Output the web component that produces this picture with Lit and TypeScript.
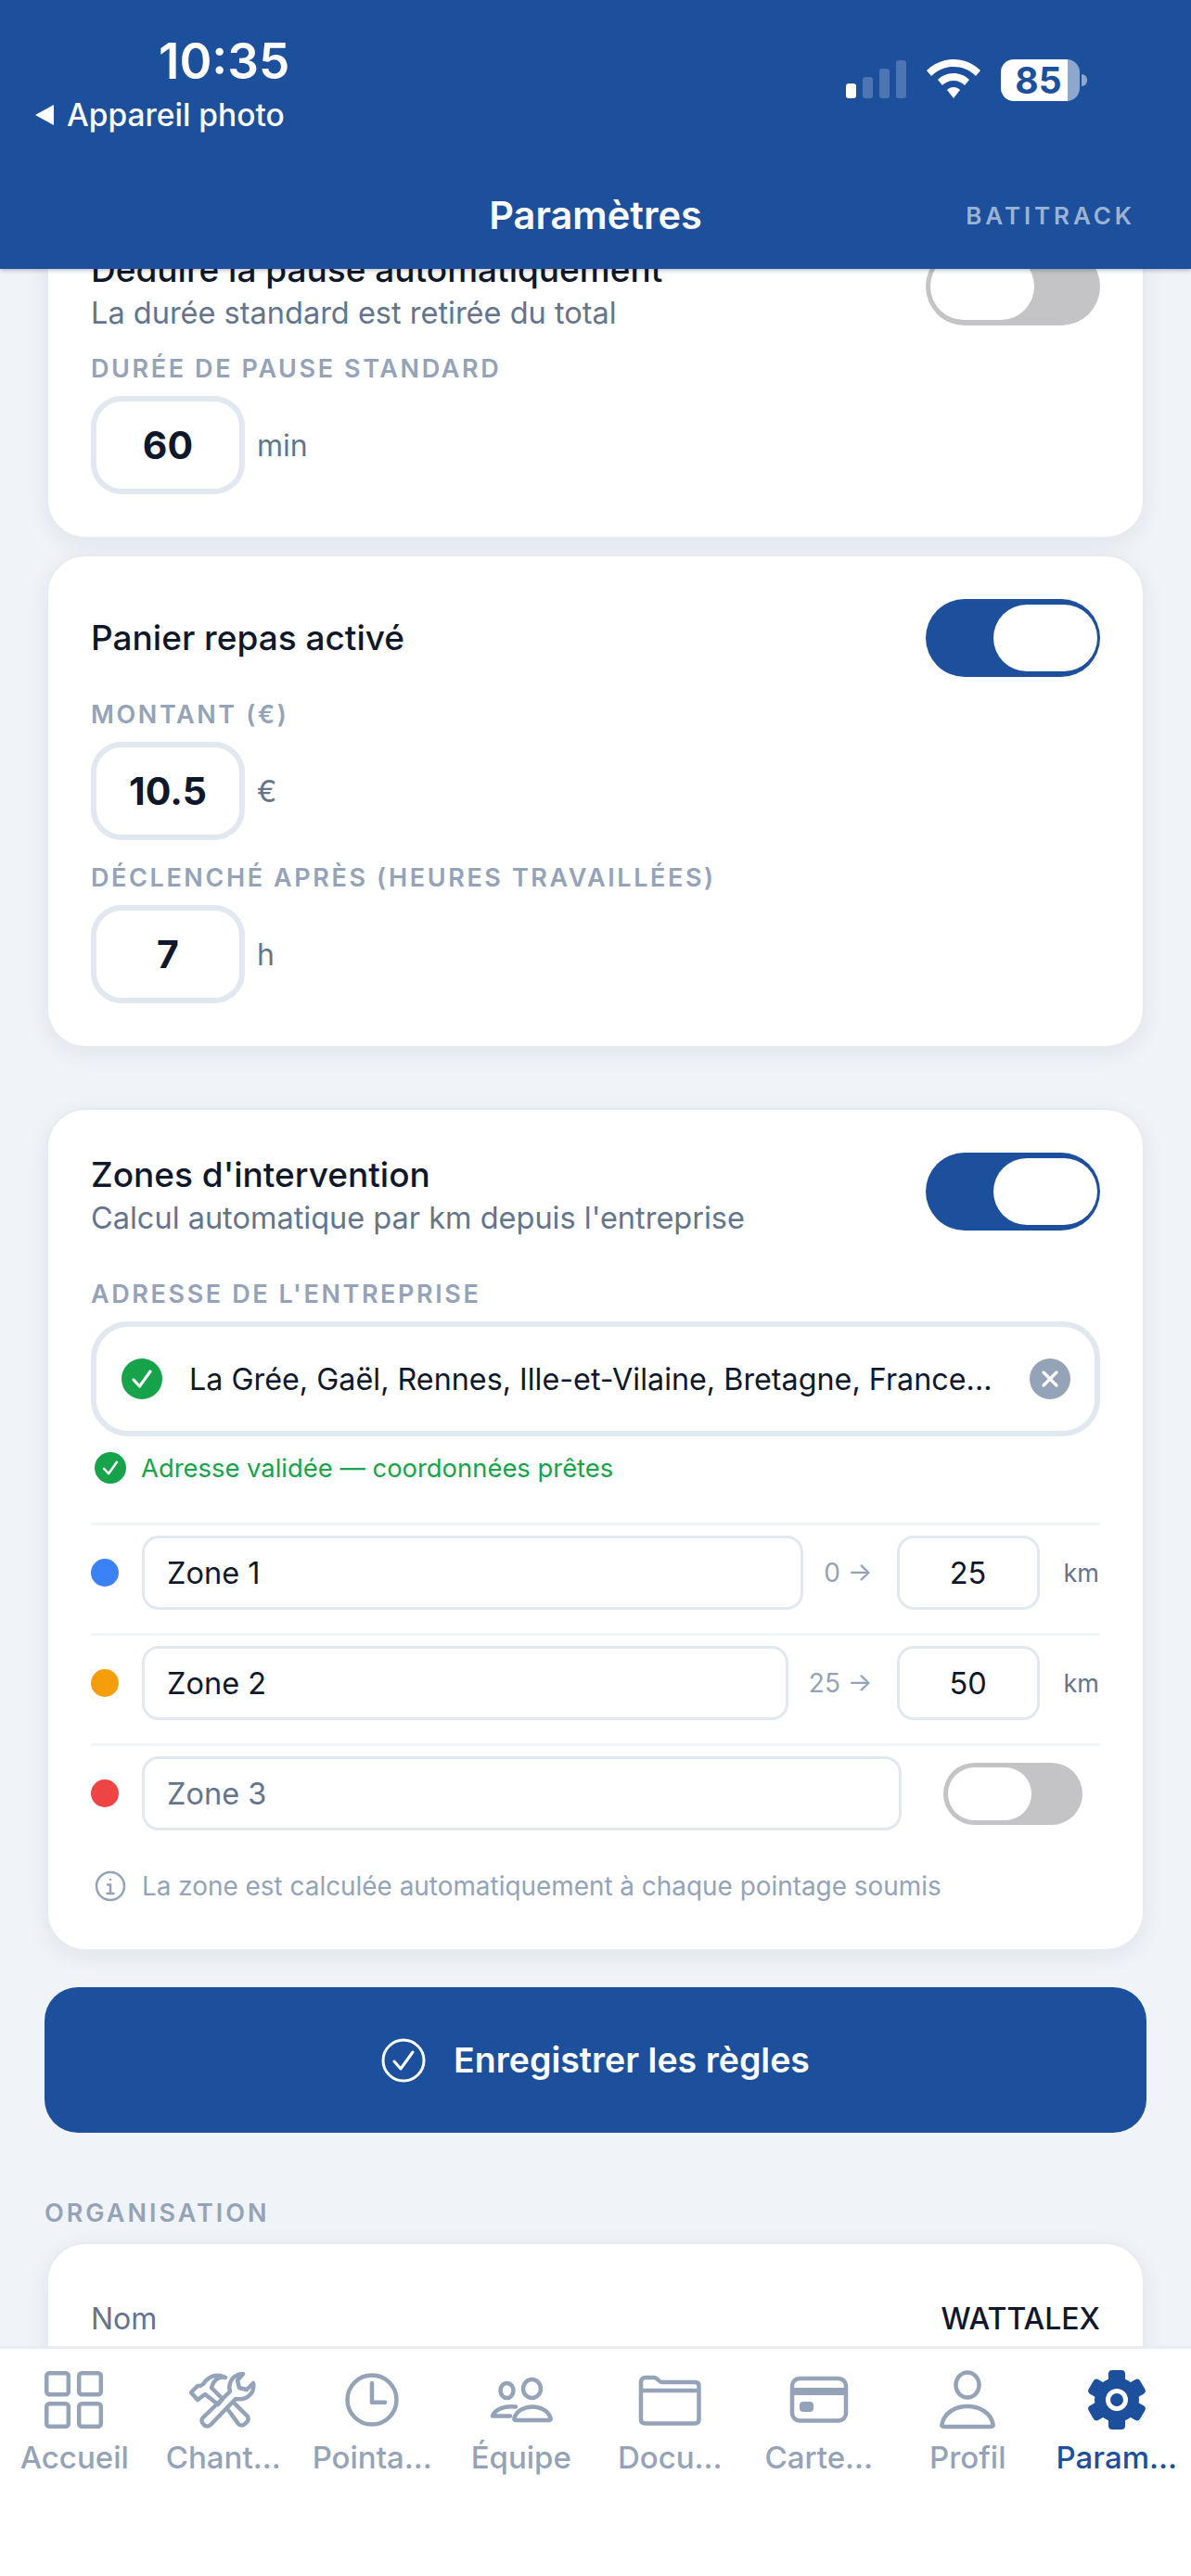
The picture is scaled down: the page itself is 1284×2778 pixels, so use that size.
import { html, LitElement, css, svg } from "lit";
import { customElement } from "lit/decorators.js";
import { map } from "lit/directives/map.js";

const tabs = [
  {
    label: "Accueil",
    icon: svg`<rect x="9.2" y="10.2" width="23.6" height="23" rx="3"/><rect x="44.2" y="10.2" width="23.6" height="23" rx="3"/><rect x="9.2" y="43.2" width="23.6" height="24.6" rx="3"/><rect x="44.2" y="43.2" width="23.6" height="24.6" rx="3"/>`,
  },
  {
    label: "Chant...",
    icon: svg`<path d="M17 58 46 30C43 20 50 11 60 11L54 18 56 26 64 28 71 21C73 32 64 40 52 38L25 66C23 68 19 68 17 65 15 63 15 60 17 58Z"/><path d="M44 50 55 65C57 67 60 67 62 65L65 62C66 60 66 59 65 57L50 42"/><path d="M33 44 38 38 26 26C28 18 34 13 41 15 33 11 24 12 17 22L14 24 11 24 4 31 11 39 19 33Z"/>`,
  },
  {
    label: "Pointa...",
    icon: svg`<circle cx="39" cy="39" r="26.5"/><path d="M39 21V41.7H53"/>`,
  },
  {
    label: "Équipe",
    icon: svg`<ellipse cx="23.5" cy="29" rx="7" ry="8"/><ellipse cx="50.5" cy="27" rx="9.5" ry="10"/><path d="M33 61H69C70.5 61 71 60 70.5 58.5 68 51 60 46.5 51 46.5 42 46.5 34 51 31.5 58.5 31 60 31.5 61 33 61Z"/><path d="M33 46.5C21 45 11 49 8 56.5H27"/>`,
  },
  {
    label: "Docu...",
    icon: svg`<path d="M8 29V20C8 17 10 15 13 15H22C24 15 25 16 27 18 28 19 29 20 31 20H66C69 20 70.5 21.5 70.5 24V60C70.5 63 69 64.5 66 64.5H13C10 64.5 8 63 8 60ZM8 29H70.5"/>`,
  },
  {
    label: "Carte...",
    icon: svg`<rect x="10" y="16" width="58" height="45.5" rx="8"/><path class="solid" d="M9 26H69V34H9Z"/><rect class="solid" x="18" y="41" width="15" height="11" rx="4"/>`,
  },
  {
    label: "Profil",
    icon: svg`<ellipse cx="39" cy="23" rx="12.5" ry="13.5"/><path d="M14 68H64C66.500 68 67 67 66.500 65 64 53 52 46 39 46 26 46 14 53 11.500 65 11 67 11.500 68 14 68Z"/>`,
  },
  {
    label: "Param...",
    active: true,
    icon: svg`<g class="gear"><circle cx="39" cy="39" r="24"/>${[0, 60, 120, 180, 240, 300].map(
      (a) => svg`<rect x="30" y="7" width="18" height="20" rx="4" transform="rotate(${a} 39 39)"/>`
    )}<circle class="hole" cx="39" cy="39" r="12"/><circle cx="39" cy="39" r="7"/></g>`,
  },
];

const checkBadge = svg`<svg viewBox="0 0 44 44" aria-hidden="true"><circle cx="22" cy="22" r="22" fill="#16a34a"/><path d="M13 23l6.500 7L31 14" fill="none" stroke="#fff" stroke-width="3.200" stroke-linecap="round" stroke-linejoin="round"/></svg>`;

@customElement("app-root")
export class AppRoot extends LitElement {
  static styles = css`
    :host {
      display: flex;
      flex-direction: column;
      width: 1284px;
      height: 2778px;
      overflow: hidden;
      background: #f0f4f9;
      font-family: Inter, "Liberation Sans", sans-serif;
      color: #0f172a;
    }

    header {
      position: relative;
      z-index: 2;
      flex: none;
      height: 290px;
      box-sizing: border-box;
      background: #1c4f9c;
      color: #fff;
      box-shadow: 0 2px 4px rgba(15, 23, 42, 0.25);
    }

    .status {
      display: flex;
      justify-content: space-between;
      height: 185px;
      box-sizing: border-box;
      padding: 33px 112px 0 38px;
    }

    .time {
      margin-left: 133px;
      font-size: 53px;
      line-height: 66px;
      font-weight: 600;
    }

    .back {
      display: flex;
      align-items: center;
      gap: 14px;
      margin-top: 3px;
      font-size: 33.500px;
      line-height: 44px;
      font-weight: 500;
    }

    .back svg {
      width: 20px;
      height: 22px;
      fill: #fff;
    }

    .sys {
      display: flex;
      align-items: flex-start;
      padding-top: 31px;
      gap: 22px;
    }

    .bars {
      display: flex;
      align-items: flex-end;
      gap: 7px;
      height: 42px;
    }

    .bars i {
      width: 11px;
      border-radius: 3px;
      background: rgba(255, 255, 255, 0.22);
    }

    .bars i.on {
      background: #fff;
    }

    .wifi {
      width: 58px;
      height: 42px;
      fill: #fff;
    }

    .battery {
      display: flex;
      align-items: center;
      gap: 2px;
    }

    .cell {
      width: 85px;
      height: 45px;
      padding-right: 4px;
      box-sizing: border-box;
      border-radius: 14px;
      overflow: hidden;
      display: flex;
      align-items: center;
      justify-content: center;
      color: #1c4f9c;
      font-size: 39px;
      font-weight: 700;
      background: linear-gradient(
        90deg,
        #fff 0,
        #fff 72px,
        rgba(255, 255, 255, 0.5) 72px
      );
    }

    .cap {
      width: 6px;
      height: 13px;
      border-radius: 0 6px 6px 0;
      background: rgba(255, 255, 255, 0.5);
    }

    .nav {
      position: relative;
      display: flex;
      align-items: center;
      justify-content: center;
      height: 94px;
      font-size: 41.500px;
      font-weight: 600;
    }

    .brand {
      position: absolute;
      right: 60px;
      font-size: 26px;
      font-weight: 600;
      letter-spacing: 3.900px;
      color: rgba(255, 255, 255, 0.58);
    }

    .scroll {
      flex: 1;
      min-height: 0;
      overflow: hidden;
      padding: 0 50px;
    }

    .inner {
      margin-top: -71px;
    }

    .card {
      box-sizing: border-box;
      padding: 46px;
      border: 2px solid #e6ebf2;
      border-radius: 42px;
      background: #fff;
      box-shadow: 0 6px 24px rgba(15, 23, 42, 0.07);
    }

    .card + .card {
      margin-top: 17px;
    }

    .card.zones {
      margin-top: 65px;
    }

    .row {
      display: flex;
      justify-content: space-between;
      align-items: flex-start;
    }

    .row.center {
      align-items: center;
    }

    .title {
      font-size: 37px;
      line-height: 48px;
      font-weight: 500;
    }

    .sub {
      font-size: 32.500px;
      line-height: 46px;
      color: #64748b;
    }

    .toggle {
      flex: none;
      display: flex;
      width: 188px;
      height: 84px;
      box-sizing: border-box;
      padding: 6px 3px 6px 5px;
      border-radius: 42px;
      background: #c4c4c6;
    }

    .toggle.on {
      justify-content: flex-end;
      background: #1c4f9c;
    }

    .toggle b {
      width: 112px;
      border-radius: 36px;
      background: #fff;
    }

    .toggle.small {
      width: 150px;
      height: 67px;
      margin: 0 18px 0 19px;
      padding: 5px;
    }

    .toggle.small b {
      width: 90px;
    }

    .label {
      margin: 21px 0 9px;
      font-size: 27px;
      line-height: 40px;
      font-weight: 600;
      letter-spacing: 2.600px;
      color: #94a3b8;
    }

    .label.after-sub {
      margin-top: 17px;
    }

    .label.after-zone {
      margin-top: 39px;
    }

    .field {
      display: flex;
      align-items: center;
      gap: 13px;
    }

    .num {
      display: flex;
      align-items: center;
      justify-content: center;
      width: 166px;
      height: 106px;
      box-sizing: border-box;
      border: 6px solid #e2e8f0;
      border-radius: 33px;
      font-size: 41px;
      font-weight: 700;
    }

    .unit {
      font-size: 32px;
      color: #64748b;
    }

    .address {
      display: flex;
      align-items: center;
      height: 124px;
      box-sizing: border-box;
      padding: 0 26px 0 27px;
      border: 6px solid #e2e8f0;
      border-radius: 40px;
      font-size: 32.300px;
    }

    .address svg {
      flex: none;
      width: 44px;
      height: 44px;
    }

    .address span {
      flex: 1;
      margin-left: 29px;
      white-space: nowrap;
    }

    .valid {
      display: flex;
      align-items: center;
      gap: 16px;
      height: 40px;
      margin: 14px 0 39px 4px;
      font-size: 27.400px;
      color: #16a34a;
    }

    .valid svg {
      width: 34px;
      height: 34px;
    }

    .zone {
      display: flex;
      align-items: center;
      gap: 26px;
      height: 119px;
      box-sizing: border-box;
      padding: 11px 1px 25px 0;
      border-top: 3px solid #f1f5f9;
    }

    .dot {
      flex: none;
      width: 30px;
      height: 30px;
      margin-right: -1px;
      border-radius: 50%;
    }

    .box {
      display: flex;
      align-items: center;
      height: 80px;
      box-sizing: border-box;
      border: 3px solid #e2e8f0;
      border-radius: 18px;
      font-size: 32.500px;
    }

    .box.name {
      flex: 1;
      min-width: 0;
      padding-left: 24px;
    }

    .box.name.off {
      color: #64748b;
    }

    .box.km {
      flex: none;
      justify-content: center;
      width: 154px;
    }

    .from {
      flex: none;
      margin-left: -4px;
      font-size: 28px;
      color: #94a3b8;
    }

    .suffix {
      flex: none;
      font-size: 27px;
      color: #64748b;
    }

    .info {
      display: flex;
      align-items: center;
      gap: 17px;
      margin: 15px 0 2px 4px;
      font-size: 27.900px;
      line-height: 40px;
      color: #94a3b8;
    }

    .info svg {
      flex: none;
      width: 34px;
      height: 34px;
      fill: none;
      stroke: #94a3b8;
      stroke-width: 2.500;
      stroke-linecap: round;
    }

    .save {
      display: flex;
      align-items: center;
      justify-content: center;
      gap: 30px;
      height: 157px;
      margin: 39px -2px 0;
      border-radius: 36px;
      background: #1c4f9c;
      color: #fff;
      font-size: 37.500px;
      font-weight: 600;
    }

    .save svg {
      width: 48px;
      height: 48px;
      fill: none;
      stroke: #fff;
      stroke-width: 3;
      stroke-linecap: round;
      stroke-linejoin: round;
    }

    .section {
      margin: 67px -2px 11px;
      font-size: 27px;
      line-height: 40px;
      font-weight: 600;
      letter-spacing: 3px;
      color: #94a3b8;
    }

    .org {
      justify-content: space-between;
      align-items: center;
      display: flex;
      height: 70px;
      margin-top: -1px;
      font-size: 32px;
    }

    .org span:first-child {
      color: #64748b;
    }

    .org span:last-child {
      font-weight: 500;
    }

    nav {
      position: relative;
      z-index: 2;
      flex: none;
      display: grid;
      grid-template-columns: repeat(8, 1fr);
      height: 248px;
      box-sizing: border-box;
      border-top: 3px solid #e8edf3;
      background: #fff;
      padding-top: 16px;
    }

    .tab {
      display: flex;
      flex-direction: column;
      align-items: center;
      color: #94a3b8;
      font-size: 33px;
      font-weight: 500;
      line-height: 44px;
      white-space: nowrap;
    }

    .tab svg {
      width: 78px;
      height: 78px;
      margin-bottom: 1px;
      fill: none;
      stroke: #94a3b8;
      stroke-width: 4.500;
      stroke-linecap: round;
      stroke-linejoin: round;
    }

    .tab .solid {
      fill: #94a3b8;
      stroke: none;
    }

    .tab.active {
      color: #1c4f9c;
    }

    .gear {
      fill: #1c4f9c;
      stroke: none;
    }

    .gear .hole {
      fill: #fff;
    }
  `;

  private toggle(on: boolean, small = false) {
    return html`<div class="toggle ${on ? "on" : ""} ${small ? "small" : ""}"><b></b></div>`;
  }

  private zone(color: string, name: string, from: string, to: string) {
    return html`<div class="zone">
      <div class="dot" style="background: ${color}"></div>
      <div class="box name">${name}</div>
      <div class="from">${from} →</div>
      <div class="box km">${to}</div>
      <div class="suffix">km</div>
    </div>`;
  }

  render() {
    return html`
      <header>
        <div class="status">
          <div>
            <div class="time">10:35</div>
            <div class="back">
              <svg viewBox="0 0 20 22"><path d="M20 0V22L0 11Z" /></svg>
              Appareil photo
            </div>
          </div>
          <div class="sys">
            <div class="bars">
              <i class="on" style="height: 16px"></i>
              <i style="height: 23px"></i>
              <i style="height: 32px"></i>
              <i style="height: 41px"></i>
            </div>
            <svg class="wifi" viewBox="0 0 58 42">
              <path d="M29 0C40 0 50 4 58 12L53 18C46 11 38 8 29 8 20 8 12 11 5 18L0 12C8 4 18 0 29 0Z" />
              <path d="M29 15C35 15 41 17 46 22L41 28C38 25 34 23 29 23 24 23 20 25 17 28L12 22C17 17 23 15 29 15Z" />
              <path d="M29 30C32 30 34 31 36 33L29 42 22 33C24 31 26 30 29 30Z" />
            </svg>
            <div class="battery">
              <div class="cell">85</div>
              <div class="cap"></div>
            </div>
          </div>
        </div>
        <div class="nav">
          Paramètres
          <span class="brand">BATITRACK</span>
        </div>
      </header>

      <div class="scroll">
        <div class="inner">
          <div class="card">
            <div class="row">
              <div>
                <div class="title">Déduire la pause automatiquement</div>
                <div class="sub">La durée standard est retirée du total</div>
              </div>
              ${this.toggle(false)}
            </div>
            <div class="label after-sub">DURÉE DE PAUSE STANDARD</div>
            <div class="field"><div class="num">60</div><span class="unit">min</span></div>
          </div>

          <div class="card">
            <div class="row center">
              <div class="title">Panier repas activé</div>
              ${this.toggle(true)}
            </div>
            <div class="label">MONTANT (€)</div>
            <div class="field"><div class="num">10.5</div><span class="unit">€</span></div>
            <div class="label">DÉCLENCHÉ APRÈS (HEURES TRAVAILLÉES)</div>
            <div class="field"><div class="num">7</div><span class="unit">h</span></div>
          </div>

          <div class="card zones">
            <div class="row">
              <div>
                <div class="title">Zones d'intervention</div>
                <div class="sub">Calcul automatique par km depuis l'entreprise</div>
              </div>
              ${this.toggle(true)}
            </div>
            <div class="label after-zone">ADRESSE DE L'ENTREPRISE</div>
            <div class="address">
              ${checkBadge}
              <span>La Grée, Gaël, Rennes, Ille-et-Vilaine, Bretagne, France...</span>
              <svg viewBox="0 0 44 44">
                <circle cx="22" cy="22" r="22" fill="#94a3b8" />
                <path d="M15 15l14 14M29 15L15 29" stroke="#fff" stroke-width="3.200" stroke-linecap="round" />
              </svg>
            </div>
            <div class="valid">${checkBadge} Adresse validée — coordonnées prêtes</div>
            ${this.zone("#3b82f6", "Zone 1", "0", "25")}
            ${this.zone("#f59e0b", "Zone 2", "25", "50")}
            <div class="zone">
              <div class="dot" style="background: #ef4444"></div>
              <div class="box name off">Zone 3</div>
              ${this.toggle(false, true)}
            </div>
            <div class="info">
              <svg viewBox="0 0 34 34">
                <circle cx="17" cy="17" r="15" />
                <path d="M14 15.500h3V25M13.500 25h7M17 10v.1" />
              </svg>
              La zone est calculée automatiquement à chaque pointage soumis
            </div>
          </div>

          <div class="save">
            <svg viewBox="0 0 48 48">
              <circle cx="24" cy="24" r="22" />
              <path d="M14 25l7 8 13-18" />
            </svg>
            Enregistrer les règles
          </div>

          <div class="section">ORGANISATION</div>
          <div class="card">
            <div class="org"><span>Nom</span><span>WATTALEX</span></div>
          </div>
        </div>
      </div>

      <nav>
        ${map(
          tabs,
          (t) => html`<div class="tab ${t.active ? "active" : ""}">
            <svg viewBox="0 0 78 78" aria-hidden="true">${t.icon}</svg>
            ${t.label}
          </div>`
        )}
      </nav>
    `;
  }
}

declare global {
  interface HTMLElementTagNameMap {
    "app-root": AppRoot;
  }
}
